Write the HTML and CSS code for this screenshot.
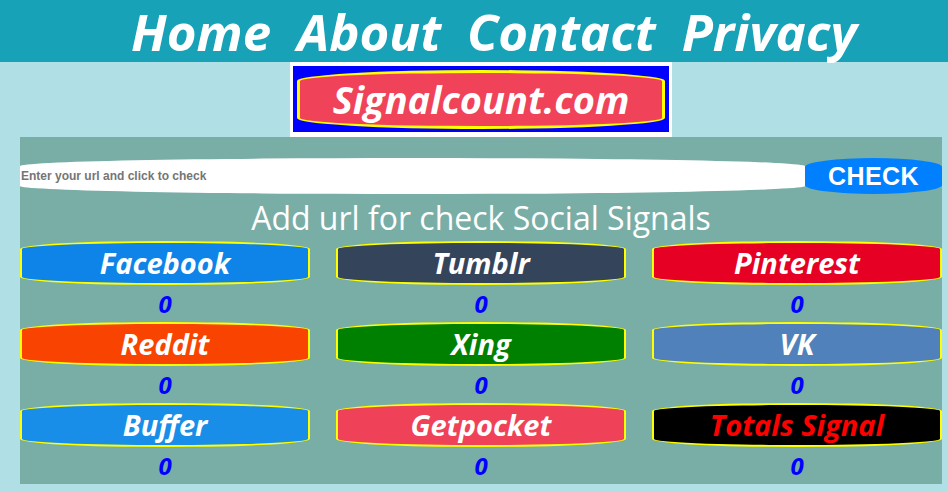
FILE: index.html
```html
<!DOCTYPE html>
<html lang="en">
<head>
<meta charset="utf-8">
<title>Signalcount.com</title>
<link rel="stylesheet" href="styles.css">
</head>
<body>
<nav class="topnav">
  <a href="#">Home</a>
  <a href="#">About</a>
  <a href="#">Contact</a>
  <a href="#">Privacy</a>
</nav>
<div class="page">
  <div class="logo-row">
    <div class="logo-frame">
      <div class="logo-blue">
        <div class="logo-pill">Signalcount.com</div>
      </div>
    </div>
  </div>
  <main class="panel">
    <form class="search" onsubmit="return false">
      <input class="url-input" type="text" placeholder="Enter your url and click to check">
      <button class="check-btn" type="submit">CHECK</button>
    </form>
    <h1 class="headline">Add url for check Social Signals</h1>
    <div class="grid">
      <div class="cell"><div class="pill facebook">Facebook</div><div class="count">0</div></div>
      <div class="cell"><div class="pill tumblr">Tumblr</div><div class="count">0</div></div>
      <div class="cell"><div class="pill pinterest">Pinterest</div><div class="count">0</div></div>
      <div class="cell"><div class="pill reddit">Reddit</div><div class="count">0</div></div>
      <div class="cell"><div class="pill xing">Xing</div><div class="count">0</div></div>
      <div class="cell"><div class="pill vk">VK</div><div class="count">0</div></div>
      <div class="cell"><div class="pill buffer">Buffer</div><div class="count">0</div></div>
      <div class="cell"><div class="pill getpocket">Getpocket</div><div class="count">0</div></div>
      <div class="cell"><div class="pill totals">Totals Signal</div><div class="count">0</div></div>
    </div>
  </main>
</div>
</body>
</html>
```
FILE: styles.css
```css
html, body {
  margin: 0;
  padding: 0;
}
body {
  background: #b0e0e6;
  font-family: "Open Sans", "Noto Sans", sans-serif;
}
.topnav {
  background: #17a2b8;
  height: 62px;
  display: flex;
  justify-content: center;
  align-items: flex-start;
  gap: 26px;
  padding-left: 40px;
  box-sizing: border-box;
}
.topnav a {
  color: #fff;
  text-decoration: none;
  font-size: 51px;
  font-weight: 700;
  font-style: italic;
  line-height: 62px;
}
.page {
  margin: 0 6px 0 20px;
}
.logo-row {
  display: flex;
  justify-content: center;
}
.logo-frame {
  background: #fff;
  padding: 4px 3px 5px;
}
.logo-blue {
  background: #0000ff;
  padding: 4px 4px 3px;
}
.logo-pill {
  width: 362px;
  height: 53px;
  background: #f04259;
  border: 3px solid #ffff00;
  border-radius: 50% / 11px;
  color: #fff;
  font-size: 38px;
  font-weight: 700;
  font-style: italic;
  line-height: 52px;
  text-align: center;
}
.panel {
  background: #78aea6;
  padding-top: 21px;
}
.search {
  display: flex;
  margin: 0;
}
.url-input {
  flex: 1;
  height: 36px;
  box-sizing: border-box;
  border: none;
  background: #fff;
  border-radius: 50% / 8px;
  padding: 0 0 0 1px;
  font-family: "Liberation Sans", Arial, sans-serif;
  font-weight: 700;
  font-size: 12px;
  color: #333;
  outline: none;
}
.url-input::placeholder {
  color: #757575;
}
.check-btn {
  width: 137px;
  height: 36px;
  border: none;
  background: #0080ff;
  color: #fff;
  border-radius: 50% / 9px;
  font-family: "Liberation Sans", Arial, sans-serif;
  font-weight: 700;
  font-size: 25px;
  letter-spacing: 0.4px;
  padding: 0;
}
.headline {
  margin: 0;
  color: #fff;
  font-weight: 400;
  font-size: 32px;
  line-height: 47px;
  text-align: center;
}
.grid {
  display: grid;
  grid-template-columns: repeat(3, 1fr);
  column-gap: 26px;
}
.pill {
  height: 44px;
  box-sizing: border-box;
  border: 2px solid #ffff00;
  border-radius: 50% / 8px;
  color: #fff;
  font-size: 29px;
  font-weight: 700;
  font-style: italic;
  line-height: 40px;
  text-align: center;
}
.count {
  height: 37px;
  color: #0000ff;
  font-size: 24px;
  font-weight: 700;
  font-style: italic;
  line-height: 37px;
  text-align: center;
}
.facebook { background: #0e84e8; }
.tumblr { background: #34445b; }
.pinterest { background: #e60023; }
.reddit { background: #f84400; }
.xing { background: #008000; }
.vk { background: #5181ba; }
.buffer { background: #198ee8; }
.getpocket { background: #ef4258; }
.totals { background: #000; color: #ff0000; }
```
